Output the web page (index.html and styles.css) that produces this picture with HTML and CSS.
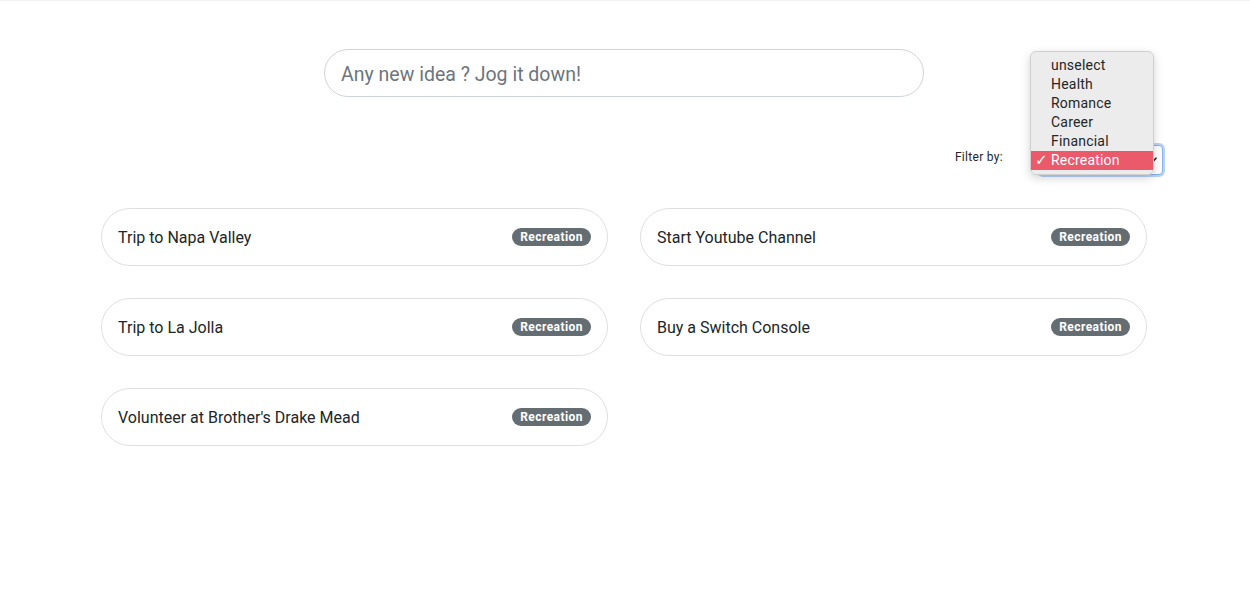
FILE: index.html
```html
<!DOCTYPE html>
<html lang="en">
<head>
<meta charset="utf-8">
<title>Ideas</title>
<link rel="stylesheet" href="styles.css">
</head>
<body>
<div class="page">
  <div class="idea-row">
    <input class="idea-input" type="text" placeholder="Any new idea ? Jog it down!">
  </div>
  <div class="filter-row">
    <span class="filter-label">Filter by:</span>
    <div class="select-wrap">
      <div class="select-box">
        <svg class="select-chevron" width="8" height="6" viewBox="0 0 8 6"><path d="M1 1.2 L4 4.4 L7 1.2" fill="none" stroke="#222" stroke-width="1.6" stroke-linecap="round" stroke-linejoin="round"/></svg>
      </div>
      <ul class="select-menu">
        <li class="menu-item">unselect</li>
        <li class="menu-item">Health</li>
        <li class="menu-item">Romance</li>
        <li class="menu-item">Career</li>
        <li class="menu-item">Financial</li>
        <li class="menu-item is-selected"><span class="menu-check">✓</span>Recreation</li>
      </ul>
    </div>
  </div>
  <div class="ideas-grid">
    <div class="idea-card"><span class="idea-title">Trip to Napa Valley</span><span class="badge">Recreation</span></div>
    <div class="idea-card"><span class="idea-title">Start Youtube Channel</span><span class="badge">Recreation</span></div>
    <div class="idea-card"><span class="idea-title">Trip to La Jolla</span><span class="badge">Recreation</span></div>
    <div class="idea-card"><span class="idea-title">Buy a Switch Console</span><span class="badge">Recreation</span></div>
    <div class="idea-card"><span class="idea-title">Volunteer at Brother's Drake Mead</span><span class="badge">Recreation</span></div>
  </div>
</div>
</body>
</html>
```

FILE: styles.css
```css
html, body {
  margin: 0;
  padding: 0;
  background: #ffffff;
}

body {
  border-top: 1px solid #f2f2f2;
  font-family: "Roboto", "Inter", "Liberation Sans", sans-serif;
  color: #212529;
}

.page {
  width: 1062px;
  margin-left: 101px;
  padding-top: 48px;
}

.idea-row {
  width: 1046px;
  display: flex;
  justify-content: center;
}

.idea-input {
  box-sizing: border-box;
  width: 600px;
  height: 48px;
  border: 1px solid #ced4da;
  border-radius: 24px;
  padding: 2px 16px 0;
  font-family: inherit;
  font-size: 19.5px;
  color: #495057;
  background: #fff;
  outline: none;
}

.idea-input::placeholder {
  color: #6c757d;
}

.filter-row {
  display: flex;
  justify-content: flex-end;
  align-items: center;
  margin-top: 48px;
  height: 30px;
}

.filter-label {
  font-size: 12px;
  letter-spacing: 0.3px;
  color: #212529;
  margin-right: 36px;
  margin-top: -7px;
}

.select-wrap {
  position: relative;
  width: 124px;
  height: 30px;
}

.select-box {
  box-sizing: border-box;
  width: 124px;
  height: 30px;
  border: 1px solid #86b2ea;
  border-radius: 4px;
  box-shadow: 0 0 0 2px #b9d4f6;
  background: #fff;
  display: flex;
  align-items: center;
  justify-content: flex-end;
  padding: 0 5px 0 10px;
}

.select-chevron {
  display: block;
}

.select-menu {
  position: absolute;
  left: -9px;
  top: -94px;
  width: 124px;
  box-sizing: border-box;
  margin: 0;
  padding: 4px 0 4px;
  list-style: none;
  background: rgba(236, 236, 236, 0.98);
  border: 1px solid #cfcfcf;
  border-radius: 6px;
  box-shadow: 0 3px 10px rgba(0, 0, 0, 0.18);
  z-index: 5;
}

.menu-item {
  height: 19px;
  line-height: 18px;
  padding-left: 20px;
  font-size: 14px;
  letter-spacing: 0.2px;
  color: #262626;
  position: relative;
}

.menu-item.is-selected {
  background: #ea5a6a;
  color: #fff;
}

.menu-check {
  position: absolute;
  left: 4px;
  top: 0;
  font-size: 15px;
  font-family: "DejaVu Sans", sans-serif;
}

.ideas-grid {
  width: 1046px;
  margin-top: 33px;
  display: grid;
  grid-template-columns: 507px 507px;
  column-gap: 32px;
  row-gap: 32px;
}

.idea-card {
  box-sizing: border-box;
  height: 58px;
  border: 1px solid #dfdfdf;
  border-radius: 29px;
  padding: 0 16px 0 16px;
  display: flex;
  align-items: center;
  justify-content: space-between;
}

.idea-title {
  font-size: 16px;
  color: #212529;
}

.badge {
  display: inline-block;
  background: #646d72;
  color: #fff;
  font-size: 12px;
  font-weight: 700;
  line-height: 18px;
  height: 18px;
  padding: 0 8px;
  letter-spacing: 0.45px;
  border-radius: 9px;
}
```
